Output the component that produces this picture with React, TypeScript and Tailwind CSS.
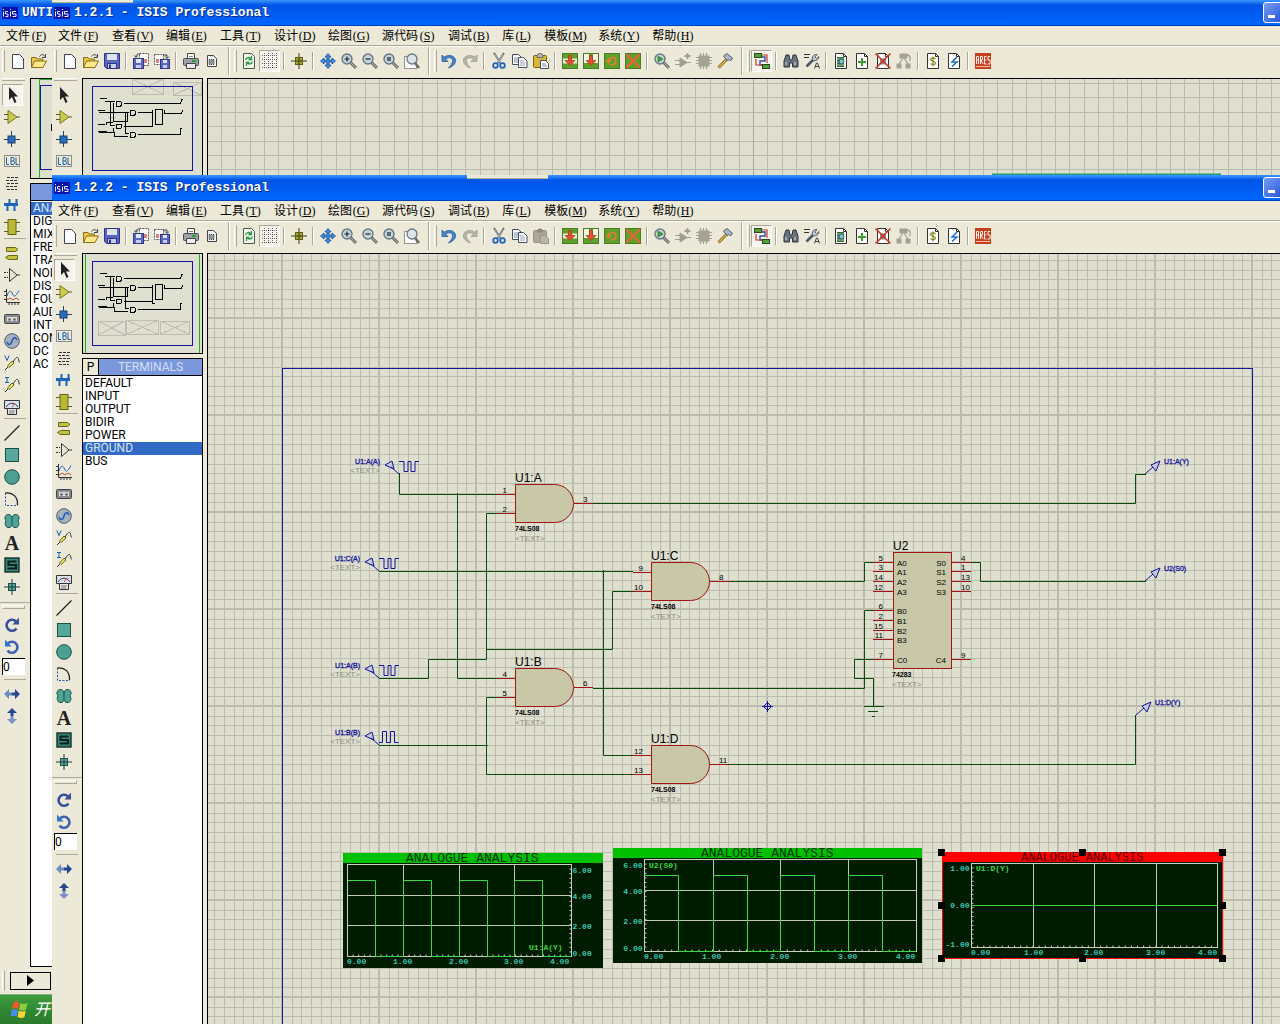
import type { ReactNode } from "react";

const page = (
  <path d="M2.500 1.500h7l4 4v10h-11z" fill="#fbfcff" stroke="#45454f" />
);
const chipPage = (
  <>
    <path d="M2.500 .5h8l3 3v12h-11z" fill="#fff" stroke="#333" />
    <path d="M10.500 .5v3h3" fill="none" stroke="#333" />
  </>
);
const lens = (
  <>
    <path d="M9.500 9.500l5.500 5.500" stroke="#6b6b6b" strokeWidth="3" />
    <path d="M9.500 9.500l5.500 5.500" stroke="#b5b5b5" strokeWidth="1" />
    <circle cx="6" cy="6" r="5" fill="#c3d3dc" stroke="#6c7880" strokeWidth="1.400" />
  </>
);
const probe = (
  <>
    <path d="M1 15l3-3" stroke="#333" />
    <path d="M3.500 11l4.500-5 2 2-5 4.500z" fill="#efe66a" stroke="#6a651a" />
    <path d="M9 7c2-3 3-5 4.500-4.500s1 3.500 2 5" fill="none" stroke="#333" />
  </>
);
const greenTile = <rect x=".5" y=".5" width="15" height="15" fill="#5ea02c" stroke="#4a7d22" />;
const sheetArrow = (
  <path d="M6.500 2.500h3v5h3.500l-5 5-5-5h3.500z" fill="#e2502c" stroke="#b03312" strokeWidth=".7" />
);

const icons: Record<string, ReactNode> = {
  new: page,
  open: (
    <>
      <path d="M.5 14V4.500h4.500l1 1.500h5.500v2" fill="#e9c94c" stroke="#8a6d16" />
      <path d="M.5 14.500l3-6.500h12l-3.500 6.500z" fill="#fbe98a" stroke="#8a6d16" />
      <path d="M8.500 3.500c1.500-2.500 4-2.500 5.500 0M14.500 1v3.500H11" fill="none" stroke="#345" />
    </>
  ),
  save: (
    <>
      <path d="M.5 .5h15v15h-13l-2-2z" fill="#5a66c4" stroke="#2f3688" />
      <rect x="3" y="1" width="10" height="6" fill="#dfe4f4" />
      <rect x="3.500" y="10.500" width="9" height="5" fill="#c9cfe8" stroke="#2f3688" />
      <rect x="5" y="11.500" width="2" height="3.500" fill="#2f3688" />
    </>
  ),
  importSec: (
    <>
      <path d="M6.500 .5h9v12h-9z" fill="#fff" stroke="#555" strokeDasharray="2 1" />
      <path d="M10 6h4v4h-4z" fill="#e08080" />
      <rect x=".5" y="5.500" width="10" height="10" fill="#5a66c4" stroke="#2f3688" />
      <rect x="3" y="6" width="5" height="4" fill="#e4e8f6" />
      <rect x="3" y="12" width="5" height="3" fill="#c9cfe8" />
      <path d="M3 4c0-3 2-3 4-3M1.500 2.500l1.500 2 1.500-2" fill="none" stroke="#345" />
    </>
  ),
  exportSec: (
    <>
      <path d="M.5 1.500h9v10h-9z" fill="#fff" stroke="#555" strokeDasharray="2 1" />
      <path d="M2 6h3v4H2z" fill="#e08080" />
      <rect x="6.500" y="6.500" width="9" height="9" fill="#5a66c4" stroke="#2f3688" />
      <rect x="9" y="7" width="4" height="3" fill="#e4e8f6" />
      <rect x="9" y="12" width="4" height="3" fill="#c9cfe8" />
      <path d="M9 2h4v3M11 3.500l2 2 2-2" fill="none" stroke="#345" />
    </>
  ),
  print: (
    <>
      <path d="M4.500 6V.5h7V6" fill="#fff" stroke="#444" />
      <path d="M6 3.500h4" stroke="#888" />
      <rect x=".5" y="5.500" width="15" height="7" rx="1" fill="#9ba2a6" stroke="#474c50" />
      <path d="M3.500 10.500h9v5h-9z" fill="#eee" stroke="#444" />
      <rect x="9" y="7" width="4" height="2" fill="#2f9e33" />
    </>
  ),
  markArea: (
    <>
      <path d="M3.500 2.500h6l3 3v8h-9z" fill="#f4f5f6" stroke="#444" />
      <rect x="5" y="6.500" width="5" height="5" fill="#8d9499" stroke="#444" strokeDasharray="1 1" />
    </>
  ),
  redraw: (
    <>
      <path d="M2.500 .5h8l3 3v12h-11z" fill="#f1f8ec" stroke="#505850" />
      <path d="M4.500 7c.5-3 4-3 5-1.500M10.500 3v3.500H7.500M11.500 8.500c-.5 3-4 3-5 1.500M5.500 13V9.500h3" fill="none" stroke="#2c9140" strokeWidth="1.300" />
    </>
  ),
  grid: (
    <path d="M0 2.500h16M0 6.500h16M0 10.500h16M0 14.500h16M2.500 0v16M6.500 0v16M10.500 0v16M14.500 0v16" stroke="#444" strokeDasharray="1 1" strokeWidth=".8" fill="none" />
  ),
  origin: (
    <>
      <path d="M8 0v16M0 8h16" stroke="#38381a" />
      <rect x="4.500" y="4.500" width="7" height="7" fill="#a5a62e" stroke="#5c5c16" />
      <path d="M8 5v6M5 8h6" stroke="#38381a" />
    </>
  ),
  pan: (
    <path d="M8 .5l3 3.500H9v3h3V5l3.500 3L12 11V9H9v3h2l-3 3.500L5 12h2V9H4v2L.5 8 4 5v2h3V4H5z" fill="#3f8de0" stroke="#134a90" strokeWidth=".8" />
  ),
  zoomIn: <>{lens}<path d="M3.500 6h5M6 3.500v5" stroke="#222" strokeWidth="1.200" /></>,
  zoomOut: <>{lens}<path d="M3.500 6h5" stroke="#222" strokeWidth="1.200" /></>,
  zoomAll: <>{lens}<rect x="4" y="4" width="4" height="4" fill="#5b6970" /></>,
  zoomArea: (
    <>
      <rect x=".5" y="3.500" width="12" height="12" fill="#fff" stroke="#333" strokeDasharray="1 1" />
      <path d="M11 10l4 5" stroke="#6b6b6b" strokeWidth="2.600" />
      <circle cx="8" cy="6" r="5" fill="#dbe4e9" stroke="#6c7880" strokeWidth="1.300" />
    </>
  ),
  undo: <path d="M1 2v6.500h6L4.700 6.200C8 3.500 12 5 11.500 8.500c-.3 2.500-2 4-4 6.500 5-1.500 7.500-5 7-8C13.800 2.500 7.500 1 3 4.200z" fill="#4585cc" stroke="#1d4f92" strokeWidth=".7" />,
  redo: <path d="M15 2v6.500H9l2.300-2.300C8 3.500 4 5 4.500 8.500c.3 2.500 2 4 4 6.500-5-1.500-7.500-5-7-8C2.200 2.500 8.500 1 13 4.200z" fill="#b8b5a8" stroke="#99968a" strokeWidth=".7" />,
  cut: (
    <>
      <path d="M3 0l7 11M13 0L6 11" stroke="#56606a" strokeWidth="1.800" />
      <path d="M3.500 1l6 9M12.500 1l-6 9" stroke="#dde3e8" strokeWidth=".6" />
      <circle cx="4.500" cy="12.500" r="2.300" fill="none" stroke="#2165bd" strokeWidth="1.800" />
      <circle cx="11.500" cy="12.500" r="2.300" fill="none" stroke="#2165bd" strokeWidth="1.800" />
    </>
  ),
  copy: (
    <>
      <path d="M.5 1.500h6l3 3v7h-9z" fill="#fff" stroke="#454f62" />
      <path d="M2 5h4M2 7h4M2 9h4" stroke="#7c8aa4" />
      <path d="M6.500 4.500h5l3.500 3.500v6.500H6.500z" fill="#fff" stroke="#454f62" />
      <path d="M8 8h4M8 10h5M8 12h5" stroke="#7c8aa4" strokeWidth=".8" />
    </>
  ),
  paste: (
    <>
      <rect x=".5" y="2.500" width="13" height="12" rx="1" fill="#d6b83c" stroke="#7c6715" />
      <path d="M4 4.500V2l2-1.500h2L10 2v2.500z" fill="#b8b8b8" stroke="#555" strokeWidth=".8" />
      <path d="M7.500 7.500h5l3 3v5h-8z" fill="#fff" stroke="#454f62" />
      <path d="M9 11h4M9 13h5" stroke="#7c8aa4" />
    </>
  ),
  pasteOff: (
    <>
      <rect x=".5" y="2.500" width="13" height="12" rx="1" fill="#aca899" stroke="#9b9789" />
      <path d="M4 4.500V2l2-1.500h2L10 2v2.500z" fill="#8e8b7e" />
      <path d="M7.500 7.500h5l3 3v5h-8z" fill="#bbb8aa" stroke="#989588" />
    </>
  ),
  blockCopy: (
    <>
      {greenTile}
      <path d="M1 5.500h5v5H1zM10 5.500h5v5h-5z" fill="#e6efd8" />
      {sheetArrow}
    </>
  ),
  blockMove: (
    <>
      {greenTile}
      <path d="M1 1h5v9H1zM10 1h5v9h-5z" fill="#f2f4e6" />
      {sheetArrow}
    </>
  ),
  blockRotate: (
    <>
      {greenTile}
      <path d="M4.500 8.500c.5-5 7-5.500 7.500-.5.3 3-3 4.500-5.500 3.500M2.500 7l2 2.500L7 7" fill="none" stroke="#e87a32" strokeWidth="1.600" />
    </>
  ),
  blockDelete: <>{greenTile}<path d="M1.500 1.500l13 13M14.500 1.500l-13 13" stroke="#ee6238" strokeWidth="2.200" /></>,
  pick: <>{lens}<path d="M4 3l5 3-5 3z" fill="#41a33a" stroke="#216a22" strokeWidth=".6" /></>,
  makeDevice: (
    <g stroke="#a19e90" fill="#a19e90">
      <path d="M5 5v9l7-4.500z" />
      <path d="M0 7.500h5M0 11.500h5M12 9.500h4" />
      <path d="M12.500 0v6M9.500 3h6" strokeWidth="1.800" />
    </g>
  ),
  packaging: (
    <g fill="#a5a294" stroke="#a5a294">
      <rect x="3" y="3" width="10" height="10" />
      <path d="M4.500 0v16M7.500 0v16M10.500 0v16M0 4.500h16M0 7.500h16M0 10.500h16" strokeWidth="1.200" />
    </g>
  ),
  hammer: (
    <>
      <path d="M1.500 14.500l8-8" stroke="#7b5c16" strokeWidth="3" />
      <path d="M1.500 14.500l8-8" stroke="#e1b64a" strokeWidth="1.400" />
      <path d="M6.500 3L10 .5l4 3.500 1.500 1-2 3-1.500-1.500-2 1z" fill="#a9b7c7" stroke="#38475a" strokeWidth=".8" />
    </>
  ),
  autoroute: (
    <>
      <path d="M7 4h4v4H6v4h3" fill="none" stroke="#2d4eb0" strokeWidth="1.400" />
      <path d="M8 2h5v8M2 6v6h6" fill="none" stroke="#c8372d" strokeWidth="1.200" />
      <rect x=".5" y=".5" width="7" height="4" fill="#56a03a" stroke="#244f17" />
      <rect x="8.500" y="11.500" width="7" height="4" fill="#56a03a" stroke="#244f17" />
    </>
  ),
  find: (
    <>
      <path d="M1 14V8l2-6h3l1 5h2l1-5h3l2 6v6H9.500v-4h-3v4z" fill="#69737f" stroke="#2e353d" />
      <path d="M3 9v3M12 9v3" stroke="#c7d0da" strokeWidth="1.200" />
    </>
  ),
  propTool: (
    <>
      <path d="M0 1.500h6M0 4.500h5" stroke="#333" />
      <path d="M2.500 13.500L9 7" stroke="#4f5a66" strokeWidth="2.600" />
      <path d="M8.500 7.500C7.500 4 9.500 1 13 1.500L11 4l1.500 1.500L15 3.500c0 3-2.500 5-6.500 4z" fill="#bcc7d2" stroke="#3f4953" strokeWidth=".8" />
      <path d="M10.500 15.500l2-5.500h1l2 5.500M11 13.500h4" fill="none" stroke="#333" strokeWidth=".9" />
    </>
  ),
  explorer: (
    <>
      {chipPage}
      <path d="M4 4h7v10H4z" fill="#2f6b35" />
      <path d="M4 6h8M4 9h8M4 12h8" stroke="#d8ecd2" strokeWidth=".8" />
      <circle cx="8.500" cy="8.500" r="2.500" fill="#7cc5d4" stroke="#1d4a55" strokeWidth=".8" />
    </>
  ),
  newSheet: <>{chipPage}<path d="M8 5v8M4 9h8" stroke="#3c9c2c" strokeWidth="2" /></>,
  removeSheet: (
    <>
      {chipPage}
      <rect x="5" y="5.500" width="6" height="6" fill="#8b8b8b" />
      <path d="M.5 .5l15 15M15.500 .5l-15 15" stroke="#cf3428" strokeWidth="1.600" />
    </>
  ),
  parent: (
    <g fill="#a5a294" stroke="#a5a294">
      <rect x="4" y="1" width="7" height="4" />
      <rect x="1" y="11" width="4" height="4" />
      <rect x="10" y="11" width="4" height="4" />
      <path d="M7 5l-4 6M8 5l4 6M11 2c4 0 4 5 2 6" fill="none" strokeWidth="1.300" />
    </g>
  ),
  bom: (
    <>
      {chipPage}
      <path d="M10.500 6c-1-1.500-5-1.500-5 .5s5 1.500 5 3.500-4 2-5 .5M8 3.500v10" fill="none" stroke="#7c8a1c" strokeWidth="1.200" />
    </>
  ),
  erc: <>{chipPage}<path d="M11 4L6 9h5l-5 4.500" fill="none" stroke="#1b6fd0" strokeWidth="1.500" /></>,
  ares: (
    <>
      <rect width="16" height="16" fill="#c6401c" />
      <path d="M1.500 11V3.500h2V11M1.500 7h2M5.500 11V3.500h2V7h-2M6 7l2 4M11.500 3.500h-2V11h2M9.500 7h2M15 3.500h-2V7h2v4h-2.500" fill="none" stroke="#fff" strokeWidth=".9" />
      <path d="M1 13.500h14" stroke="#f2c0a6" />
    </>
  ),
  select: <path d="M4 0v13l3-3 2.500 6 2-1-2.500-5.500h4z" fill="#222" />,
  component: (
    <>
      <path d="M0 5.500h4M0 10.500h4M12 8h4" stroke="#555a1c" />
      <path d="M4 1.500v13L13 8z" fill="#cccb50" stroke="#77781f" />
    </>
  ),
  junction: (
    <>
      <path d="M7.500 0v16M0 8.500h16" stroke="#1e4466" />
      <rect x="4" y="5" width="7" height="7" fill="#2b6cb8" stroke="#173f77" />
    </>
  ),
  label: (
    <>
      <rect x=".5" y="2.500" width="15" height="11" fill="none" stroke="#333" strokeDasharray="1 1" />
      <path d="M2.500 4.500v7H5M7 8h2.500M7 4.500h2c1.500 0 1.500 3.500 0 3.500 2 0 2 3.500 0 3.500H7zM12 4.500v7h2.500" fill="none" stroke="#1b62a8" />
    </>
  ),
  script: (
    <>
      <path d="M3 2.500h11M2 5.500h11M3 8.500h11M2 11.500h11M3 14.500h10" stroke="#333" strokeDasharray="3 1" />
    </>
  ),
  bus: (
    <>
      <path d="M0 7.500h14" stroke="#1b66b8" strokeWidth="3" />
      <path d="M5.500 6V2M3.500 9v5M12.500 6V2M10.500 9v5" stroke="#1b66b8" strokeWidth="2" />
    </>
  ),
  subcircuit: (
    <>
      <path d="M0 3.500h16M0 12.500h16" stroke="#5c5c16" />
      <rect x="4" y=".5" width="8" height="15" fill="#bab936" stroke="#66661a" />
    </>
  ),
  terminal: (
    <g fill="#c2c140" stroke="#66661a">
      <path d="M2.500 2.500h9l2.500 2-2.500 2h-9z" />
      <path d="M13.500 10.500h-9l-3 2 3 2h9z" />
    </g>
  ),
  pin: (
    <>
      <path d="M5.500 1.500v13L13 8z" fill="none" stroke="#333" />
      <path d="M0 5.500h4M0 10.500h4" stroke="#333" strokeDasharray="2 1" />
      <path d="M13 8h3" stroke="#333" />
    </>
  ),
  graph: (
    <>
      <path d="M2.500 0v13.500H16M0 2.500h2M0 6.500h2M0 10.500h2M5 14v2M8 14v2M11 14v2M14 14v2" fill="none" stroke="#333" />
      <path d="M3 7c2-6 4-6 5.500-2S12 7 15 1.500" fill="none" stroke="#1c5db6" />
      <path d="M3 11l3-2 3 2 3-2 3 2" fill="none" stroke="#c24a2e" />
    </>
  ),
  tape: (
    <>
      <rect x=".5" y="3.500" width="15" height="9" rx="1" fill="#8a8d90" stroke="#424548" />
      <rect x="3" y="6" width="10" height="4" fill="#d9dadb" />
      <path d="M4.500 7.500h2v2h-2zM9.500 7.500h2v2h-2z" fill="#444" />
    </>
  ),
  generator: (
    <>
      <circle cx="8" cy="8" r="7.300" fill="#a7b2c0" stroke="#50586a" />
      <path d="M3 9c1.500 4 4 3 5-1s3.500-4.500 5-1" fill="none" stroke="#1f5cb8" strokeWidth="1.600" />
    </>
  ),
  vprobe: <>{probe}<path d="M.8 .5L3 5.500 5.200.5" fill="none" stroke="#1c5db6" /></>,
  iprobe: <>{probe}<path d="M1 .5h4M3 .5v5M1 5.500h4" fill="none" stroke="#1c5db6" /></>,
  instrument: (
    <>
      <path d="M.5 1.500h15v8H.5z" fill="#d7e3f1" stroke="#333" />
      <path d="M2 8c3-5 9-5 12 0" fill="none" stroke="#333" />
      <path d="M8 8l3-4" stroke="#c24a2e" />
      <path d="M3.500 9.500h9v6h-9z" fill="#e6e6e6" stroke="#333" />
      <path d="M5 12h6M5 14h5" stroke="#777" />
    </>
  ),
  line: <path d="M.5 15.500l15-15" stroke="#222" strokeWidth="1.300" />,
  box: <rect x="1.500" y="1.500" width="13" height="13" fill="#57a79d" stroke="#1d4f4a" />,
  circle: <circle cx="8" cy="8" r="7.300" fill="#4c9f93" stroke="#1d4f4a" />,
  arc: (
    <>
      <path d="M1.500 2v12.500H14" fill="none" stroke="#2357b0" strokeDasharray="2 1.500" />
      <path d="M1.500 2C9 1 14 6 13.500 14" fill="none" stroke="#222" strokeWidth="1.300" />
    </>
  ),
  path2d: (
    <path d="M8 4C6 0 1 1 1 5c0 1.500.5 2 1 3-2 3 0 7 3 6.500 2 0 2.500-1.500 3-2.500.5 1 1 2.500 3 2.500 3.500.5 5-3.500 3-6.500.5-1 1-1.500 1-3 0-4-5-5-7-1zM8 4v8" fill="#4fa498" stroke="#1d4f4a" />
  ),
  symbol: (
    <>
      <rect x="1" y="1" width="14" height="14" fill="#3b867b" stroke="#12302d" strokeWidth="1.400" />
      <path d="M12.500 4.500H4.500v3.500h7.500v3.500H3.500" fill="none" stroke="#0a1e1c" strokeWidth="2.200" />
    </>
  ),
  marker: (
    <>
      <path d="M8 0v16M0 8h16" stroke="#1d3f3c" />
      <rect x="4.500" y="4.500" width="7" height="7" fill="#5aa597" stroke="#1d4f4a" />
      <path d="M8 5v6M5 8h6" stroke="#1d3f3c" />
    </>
  ),
  rotCw: (
    <>
      <path d="M12.500 11.500A5.500 5.500 0 1 1 12 4.500" fill="none" stroke="#37509c" strokeWidth="2.600" />
      <path d="M15 .5v7H8.500z" fill="#37509c" />
    </>
  ),
  rotCcw: (
    <>
      <path d="M3.500 11.500A5.500 5.500 0 1 0 4 4.500" fill="none" stroke="#3f62b0" strokeWidth="2.600" />
      <path d="M1 .5v7h6.500z" fill="#2a75cf" />
    </>
  ),
  flipH: (
    <>
      <path d="M0 8l5-5v3.500h3v3H5V13z" fill="#6f8cc4" />
      <path d="M16 8l-5-5v3.500H8v3h3V13z" fill="#26488f" />
    </>
  ),
  flipV: (
    <>
      <path d="M8 0l5 5H9.500v3h-3V5H3z" fill="#26488f" />
      <path d="M8 16l5-5H9.500V8h-3v3H3z" fill="#7f92c8" />
    </>
  ),
};

function Icon({ name }: { name: string }) {
  return (
    <svg viewBox="0 0 16 16" className="size-4 shrink-0 overflow-visible" aria-hidden="true">
      {icons[name]}
    </svg>
  );
}

function ToolButton({ name, pressed = false }: { name: string; pressed?: boolean }) {
  return (
    <button
      type="button"
      aria-label={name}
      className={
        pressed
          ? "flex h-[22px] w-[21px] shrink-0 items-center justify-center border border-t-[#aca899] border-r-white border-b-white border-l-[#aca899] bg-[#f6f4ec]"
          : "flex h-[22px] w-[21px] shrink-0 items-center justify-center"
      }
    >
      <Icon name={name} />
    </button>
  );
}

function Sep() {
  return (
    <span className="flex h-[18px] w-2 shrink-0 justify-center">
      <span className="w-0.5 border-r border-l border-r-white border-l-[#aca899]" />
    </span>
  );
}

function BandSep() {
  return (
    <span className="flex h-7 w-4 shrink-0 items-center gap-1 pl-1.5">
      <span className="h-7 w-0.5 border-r border-l border-r-white border-l-[#aca899]" />
      <span className="h-[22px] w-[3px] border-r border-l border-r-[#aca899] border-l-white" />
    </span>
  );
}

const fullToolbar =
  "new open save | importSec exportSec | print markArea || redraw grid* | origin | pan zoomIn zoomOut zoomAll zoomArea || undo redo | cut copy paste | blockCopy blockMove blockRotate blockDelete | pick makeDevice packaging hammer || autoroute* | find propTool | explorer newSheet removeSheet parent | bom erc | ares";

function Toolbar({ items }: { items: string }) {
  return (
    <div className="flex h-8 shrink-0 items-center overflow-hidden border-t border-white bg-[#ece9d8] pb-1 pl-0.5">
      <span className="mr-0.5 h-[22px] w-[3px] shrink-0 border-r border-l border-r-[#aca899] border-l-white" />
      {items.split(" ").map((it, i) =>
        it === "|" ? (
          <Sep key={i} />
        ) : it === "||" ? (
          <BandSep key={i} />
        ) : (
          <ToolButton key={i} name={it.replace("*", "")} pressed={it.endsWith("*")} />
        ),
      )}
    </div>
  );
}

const fullMenu: [string, string][] = [
  ["文件", "F"],
  ["查看", "V"],
  ["编辑", "E"],
  ["工具", "T"],
  ["设计", "D"],
  ["绘图", "G"],
  ["源代码", "S"],
  ["调试", "B"],
  ["库", "L"],
  ["模板", "M"],
  ["系统", "Y"],
  ["帮助", "H"],
];

function MenuBar({ items }: { items: [string, string][] }) {
  return (
    <nav className="flex h-5 shrink-0 items-center gap-3 overflow-hidden border-b border-[#aca899] bg-[#ece9d8] pl-1.5 text-[12px] leading-4 text-black">
      {items.map(([t, k]) => (
        <button key={t} type="button" className="flex shrink-0 whitespace-nowrap">
          <span>{t}</span>
          <span className="w-[18px] text-center font-['Liberation_Serif',serif]">
            (<u>{k}</u>)
          </span>
        </button>
      ))}
    </nav>
  );
}

function TitleBar({ title, controls = true }: { title: string; controls?: boolean }) {
  return (
    <header className="flex h-[26px] shrink-0 items-center overflow-hidden border-b border-[#0040b8] bg-linear-to-b from-[#3c96ff] via-[#0054e6] via-20% to-[#0066ff] pl-0.5">
      <svg viewBox="0 0 16 12" className="h-3 w-4 shrink-0" aria-hidden="true">
        <rect width="16" height="12" fill="#0a12a8" />
        <path d="M1.500 4.500v5M1.500 2v1M6 4.500H3.500V7H6v2.500H3.500M8.500 4.500v5M8.500 2v1M14 4.500h-3.500V7H14v2.500h-3.500" fill="none" stroke="#e8ecff" />
      </svg>
      <h1 className="ml-1 shrink-0 font-['Liberation_Mono',monospace] text-[13px] leading-4 font-bold whitespace-nowrap text-white [text-shadow:1px_1px_0_#0a2a8a]">
        {title}
      </h1>
      {controls && (
        <button
          type="button"
          aria-label="Minimize"
          className="-mr-1 ml-auto flex h-[21px] w-[21px] shrink-0 items-end rounded-[3px] border border-white bg-linear-to-br from-[#7a9cf0] to-[#2350d8] p-1"
        >
          <span className="h-[3px] w-[7px] bg-white" />
        </button>
      )}
    </header>
  );
}

const sideGroups = [
  ["select", "component", "junction", "label", "script", "bus", "subcircuit"],
  ["terminal", "pin", "graph", "tape", "generator", "vprobe", "iprobe", "instrument"],
  ["line", "box", "circle", "arc", "path2d", "A", "symbol", "marker"],
];

function SideButton({ name, pressed }: { name: string; pressed?: boolean }) {
  return (
    <button
      type="button"
      aria-label={name}
      className={
        pressed
          ? "ml-0.5 flex h-[22px] w-[21px] items-center justify-center border border-t-[#aca899] border-r-white border-b-white border-l-[#aca899] bg-[#f6f4ec]"
          : "flex h-[22px] w-6 items-center justify-center"
      }
    >
      {name === "A" ? (
        <span className="font-['Liberation_Serif',serif] text-[20px] leading-5 font-bold text-[#222]">A</span>
      ) : (
        <Icon name={name} />
      )}
    </button>
  );
}

function SideSep() {
  return <div className="ml-1 h-1 w-[22px] border-t border-[#aca899]" />;
}

function SideBar({ pressed, short = false }: { pressed: boolean; short?: boolean }) {
  const groups = short ? [sideGroups[0].slice(0, 4)] : sideGroups;
  return (
    <div className="flex w-[30px] shrink-0 flex-col overflow-hidden bg-[#ece9d8]">
      <div className="mb-[3px] ml-0.5 h-[3px] w-[23px] border-t border-b border-t-white border-b-[#aca899]" />
      {groups.map((g, i) => (
        <div key={i} className="flex flex-col">
          {i > 0 && <SideSep />}
          {g.map((n) => (
            <SideButton key={n} name={n} pressed={pressed && n === "select"} />
          ))}
        </div>
      ))}
      {!short && (
        <>
          <div className="mt-1 border-t border-[#aca899]" />
          <div className="mt-0.5 mb-[5px] ml-0.5 h-1 w-[23px] border border-t-white border-r-[#aca899] border-b-[#aca899] border-l-white" />
          <SideButton name="rotCw" />
          <SideButton name="rotCcw" />
          <input
            aria-label="Rotation angle"
            defaultValue="0"
            className="mb-1 ml-0.5 h-[17px] w-[23px] border-t border-l border-black bg-white font-['Roboto',sans-serif] text-[12px] leading-4 text-black outline-none"
          />
          <SideSep />
          <SideButton name="flipH" />
          <SideButton name="flipV" />
        </>
      )}
    </div>
  );
}

function CrossBox({ x, y, w, h }: { x: number; y: number; w: number; h: number }) {
  return <path d={`M${x} ${y}h${w}v${h}h${-w}zl${w} ${h}M${x} ${y + h}l${w} ${-h}`} fill="none" stroke="#bdbdb4" strokeWidth="3" />;
}

function Overview({ variant }: { variant: "shifted" | "full" }) {
  return (
    <div className="h-[101px] shrink-0 border border-black bg-[#dfdfcf]">
      <svg viewBox="249 253 357 297" className="block h-[99px] w-[119px]" shapeRendering="crispEdges" aria-hidden="true">
        {variant === "full" ? (
          <>
            <path d="M256.500 252v300M598.500 252v300" stroke="#19b419" strokeWidth="3" />
            <CrossBox x={294} y={454} w={82} h={42} />
            <CrossBox x={379} y={452} w={96} h={42} />
            <CrossBox x={481} y={454} w={88} h={40} />
          </>
        ) : (
          <>
            <CrossBox x={396} y={253} w={95} h={46} />
            <CrossBox x={520} y={262} w={84} h={40} />
          </>
        )}
        <rect x="277.500" y="275.500" width="300" height="252" fill="none" stroke="#1414a0" strokeWidth="3" />
        <g fill="none" stroke="#000" strokeWidth="3">
          <path d="M348 320h14q8 7 0 14h-14zM390 347h14q8 7 0 14h-14zM348 388h14q8 7 0 14h-14zM390 413h14q8 7 0 14h-14zM466 344h20v45h-20z" />
          <path d="M371 326h171l4-13h4M414 354h44v-8M371 394h87v-44M414 420h128v-20h4M492 346v9h52l4-8" />
          <path d="M300 312h20M314 320h30M294 348h22M296 352h92M294 389h22M318 392v-9h22M294 410h26M296 412h46v12h42M332 320v71h14M341 325v54h40v-27M377 352v65h10M341 400v12" />
          {variant === "full" && <path d="M458 381v20M456 401h8" />}
        </g>
      </svg>
    </div>
  );
}

const wire = "#0a4a0a";
const pinRed = "#a01414";
const ink = "#1414a0";

function gridLines(pitch: number, ox: number, oy: number, w: number, h: number) {
  let minor = "";
  let major = "";
  for (let i = -120; i <= 240; i++) {
    const x = Math.round(ox + i * pitch);
    if (x > 0 && x < w) {
      if (i % 10 === 0) major += `M${x} 0V${h}`;
      else minor += `M${x + 0.5} 0V${h}`;
    }
    const y = Math.round(oy + i * pitch);
    if (y > 0 && y < h) {
      if (i % 10 === 0) major += `M0 ${y}H${w}`;
      else minor += `M0 ${y + 0.5}H${w}`;
    }
  }
  return { minor, major };
}

function Gate({ x, y, name, a, b, out }: { x: number; y: number; name: string; a: string; b: string; out: string }) {
  return (
    <g>
      <path d={`M${x + 0.5} ${y + 0.5}h39a19 19 0 0 1 0 38h-39z`} fill="#c8c8a8" stroke={pinRed} />
      <path d={`M${x - 18} ${y + 10.5}h18M${x - 18} ${y + 29.5}h18M${x + 59} ${y + 19.5}h19`} stroke={pinRed} />
      <g fontSize="8">
        <text x={x - 8} y={y + 9} textAnchor="end">{a}</text>
        <text x={x - 8} y={y + 28} textAnchor="end">{b}</text>
        <text x={x + 68} y={y + 18}>{out}</text>
        <text x={x} y={y + 57} fill="#8c8c80">&lt;TEXT&gt;</text>
      </g>
      <text x={x} y={y + 47} fontSize="7" fontWeight="bold">74LS08</text>
      <text x={x} y={y - 2} fontSize="12">{name}</text>
    </g>
  );
}

function Source({ x, y, name, low = false }: { x: number; y: number; name: string; low?: boolean }) {
  return (
    <g>
      <path
        d={`M${x - 14} ${y - 9}l7-4 2 8zM${x - 8} ${y - 7}l8 7`}
        fill="#c4c8d8"
        stroke={ink}
      />
      <path
        d={low ? `M${x} ${y - 2.5}h3.500v-11h4v11h4v-11h4v11h4` : `M${x} ${y - 12.5}h5v10h4v-10h3v10h4v-10h4`}
        fill="none"
        stroke={ink}
      />
      <text x={x - 19} y={y - 10} fontSize="7" textAnchor="end" fill={ink} stroke={ink} strokeWidth=".3">{name}</text>
      <text x={x - 19} y={y - 1} fontSize="8" textAnchor="end" fill="#8c8c80">&lt;TEXT&gt;</text>
    </g>
  );
}

function Probe({ x, y, name }: { x: number; y: number; name: string }) {
  return (
    <g>
      <path d={`M${x} ${y}l8-7M${x + 15} ${y - 13}l-9 4 5 6z`} fill="#c4c8d8" stroke={ink} />
      <text x={x + 19} y={y - 10} fontSize="7" fill={ink} stroke={ink} strokeWidth=".3">{name}</text>
    </g>
  );
}

type ChartProps = {
  box: [number, number, number, number];
  plot: [number, number, number, number];
  cols: number[];
  rows: number[];
  trace: string;
  yLabels: [string, number][];
  yRight?: boolean;
  xLabels: number[];
  label: [string, number, number];
  titleX: number;
  titleSize: number;
  selected?: boolean;
};

function Chart({ box, plot, cols, rows, trace, yLabels, yRight, xLabels, label, titleX, titleSize, selected }: ChartProps) {
  const [bx, by, bw, bh] = box;
  const [px, py, pw, ph] = plot;
  let ticks = "";
  for (let i = 1; i < 40; i++) ticks += `M${px + (pw * i) / 40} ${py + ph}v-2`;
  const n = Math.round(ph / 4.5);
  const tx = yRight ? px + pw : px;
  for (let i = 1; i < n; i++) ticks += `M${tx} ${py + (ph * i) / n}h${yRight ? -2 : 2}`;
  return (
    <g fontFamily="'Liberation Mono', monospace">
      <rect x={bx} y={by} width={bw} height={bh} fill="#001c00" />
      <rect x={bx} y={by} width={bw} height="10" fill={selected ? "#ff0000" : "#00c000"} />
      {selected && <rect x={bx + 0.5} y={by + 0.5} width={bw - 1} height={bh - 1} fill="none" stroke="#ff0000" />}
      <text x={titleX} y={by + 9} fontSize={titleSize} fill={selected ? "#500000" : "#003000"}>ANALOGUE ANALYSIS</text>
      <rect x={px} y={py} width={pw} height={ph} fill="none" stroke="#c8d0b8" />
      <path d={cols.map((c) => `M${c} ${py}v${ph}`).join("") + rows.map((r) => `M${px} ${r}h${pw}`).join("")} stroke="#c0c8b0" />
      <path d={ticks} stroke="#c8d0b8" />
      <path d={trace} fill="none" stroke="#40d840" />
      <g fontSize="8" fontWeight="bold" fill="#3cc4b4">
        {yLabels.map(([t, y]) => (
          <text key={t} x={yRight ? px + pw + 1 : px - 2} y={y + 3} textAnchor={yRight ? "start" : "end"}>{t}</text>
        ))}
        {xLabels.map((x, i) => (
          <text key={x} x={x} y={py + ph + 7.5}>{`${i}.00`}</text>
        ))}
        <text x={label[1]} y={label[2] + 3} fill="#3fd83f">{label[0]}</text>
      </g>
    </g>
  );
}

function pulses(starts: number[], half: number, top: number, bottom: number, end: number) {
  return starts.map((s, i) => `M${s} ${i ? bottom : top}V${top}h${half}V${bottom}H${starts[i + 1] ?? end}`).join("");
}

const leftPins: [string, string, number][] = [
  ["5", "A0", 562],
  ["3", "A1", 571],
  ["14", "A2", 581],
  ["12", "A3", 591],
  ["6", "B0", 610],
  ["2", "B1", 620],
  ["15", "B2", 630],
  ["11", "B3", 639],
  ["7", "C0", 659],
];
const rightPins: [string, string, number][] = [
  ["4", "S0", 562],
  ["1", "S1", 571],
  ["13", "S2", 581],
  ["10", "S3", 591],
  ["9", "C4", 659],
];
const handles = [
  [941, 852], [1082, 852], [1222, 852], [941, 905], [1222, 905], [941, 958], [1082, 958], [1222, 958],
];

function Schematic() {
  const { minor, major } = gridLines(9.7, 559, 452, 2600, 1600);
  return (
    <svg className="block h-full w-full bg-[#dfdfcf]" role="img" aria-label="Schematic">
      <path d={minor} stroke="#bebeae" />
      <path d={major} stroke="#bcbcac" strokeWidth="2" />
      <g transform="translate(-208 -254)" fontFamily="'Liberation Sans', sans-serif" fill="#000">
        <rect x="282.500" y="368.500" width="970" height="700" fill="none" stroke={ink} />
        <g fill="none" stroke={wire}>
          <path d="M399.500 473V494.500H497M457.500 493V678.500H497M497 513.500H486.500V659.500H428.500V678.500H379M486 649.500H612.500V591.500H633M379 571.500H633M603.500 570V755.500H633" />
          <path d="M379 745.500H488M497 697.500H486.500V774.500H633M593 503.500H1135.500V474.500H1146M729 581.500H864.500V562.500H873M593 688.500H864.500V610.500H873M729 764.500H1135.500V715" />
          <path d="M873 659.500H854.500V678.500H873.500V706M864 706.500H884M868 711.500H878M872 716.500H875M971 562.500H980.500V581.500H1146" />
        </g>
        <Gate x={515} y={484} name="U1:A" a="1" b="2" out="3" />
        <Gate x={651} y={562} name="U1:C" a="9" b="10" out="8" />
        <Gate x={515} y={668} name="U1:B" a="4" b="5" out="6" />
        <Gate x={651} y={745} name="U1:D" a="12" b="13" out="11" />
        <rect x="893.500" y="552.500" width="58" height="116" fill="#c8c8a8" stroke={pinRed} />
        <g fontSize="8">
          {leftPins.map(([n, l, y]) => (
            <g key={l}>
              <path d={`M873 ${y + 0.5}h20`} stroke={pinRed} />
              <text x="883" y={y - 1} textAnchor="end">{n}</text>
              <text x="897" y={y + 4}>{l}</text>
            </g>
          ))}
          {rightPins.map(([n, l, y]) => (
            <g key={l}>
              <path d={`M952 ${y + 0.5}h19`} stroke={pinRed} />
              <text x="961" y={y - 1}>{n}</text>
              <text x="946" y={y + 4} textAnchor="end">{l}</text>
            </g>
          ))}
          <text x="892" y="687" fill="#8c8c80">&lt;TEXT&gt;</text>
        </g>
        <text x="892" y="677" fontSize="7" fontWeight="bold">74283</text>
        <text x="893" y="550" fontSize="12">U2</text>
        <Source x={399} y={474} name="U1:A(A)" />
        <Source x={379} y={571} name="U1:C(A)" />
        <Source x={379} y={678} name="U1:A(B)" />
        <Source x={379} y={745} name="U1:B(B)" low />
        <Probe x={1145} y={474} name="U1:A(Y)" />
        <Probe x={1145} y={581} name="U2(S0)" />
        <Probe x={1136} y={715} name="U1:D(Y)" />
        <path d="M767.500 701v11M762 706.500h11M763.500 706.500l4-4 4 4-4 4z" fill="none" stroke={ink} />
        <Chart
          box={[343, 853, 260, 115]}
          plot={[347.5, 864.5, 224, 92]}
          cols={[403.5, 459.5, 514.5]}
          rows={[895.5, 925.5]}
          trace={pulses([347.5, 403.5, 459.5, 514.5], 28, 880.5, 956.5, 571)}
          yLabels={[["6.00", 870], ["4.00", 896], ["2.00", 926], ["0.00", 953]]}
          yRight
          xLabels={[347, 393, 449, 504, 550]}
          label={["U1:A(Y)", 529, 947]}
          titleX={406}
          titleSize={13}
        />
        <Chart
          box={[613, 848, 309, 115]}
          plot={[644.5, 859.5, 272, 92]}
          cols={[713.5, 780.5, 848.5]}
          rows={[890.5, 920.5]}
          trace={pulses([644.5, 713.5, 780.5, 848.5], 34, 875.5, 951.5, 916)}
          yLabels={[["6.00", 865], ["4.00", 891], ["2.00", 921], ["0.00", 948]]}
          xLabels={[644, 702, 770, 838, 896]}
          label={["U2(S0)", 649, 865]}
          titleX={701}
          titleSize={13}
        />
        <Chart
          box={[942, 852, 281, 107]}
          plot={[971.5, 863.5, 246, 84]}
          cols={[1033.5, 1094.5, 1156.5]}
          rows={[]}
          trace="M971 905.500H1217"
          yLabels={[["1.00", 868], ["0.00", 905], ["-1.00", 944]]}
          xLabels={[971, 1024, 1084, 1146, 1198]}
          label={["U1:D(Y)", 976, 868]}
          titleX={1021}
          titleSize={12}
          selected
        />
        {handles.map(([x, y]) => (
          <rect key={`${x}-${y}`} x={x - 3} y={y - 3} width="7" height="7" />
        ))}
      </g>
    </svg>
  );
}

function EmptySheet() {
  const { minor } = gridLines(14.38, 545, 4, 2600, 400);
  return (
    <svg className="block h-full w-full bg-[#dfdfcf]" role="img" aria-label="Sheet">
      <path d={minor} stroke="#bcbcac" />
      <path d="M401.500 0V400M257.500 0V400M113.500 0V400M689.500 0V400M833.500 0V400M976.500 0V400M0 4.500H2600" stroke="#bcbcac" />
      <path d="M545.500 0V400" stroke="#a8a89c" />
      <path d="M784 95.500h229" stroke="#1c9c78" strokeWidth="2" />
    </svg>
  );
}

function ListHeader({ title }: { title: string }) {
  return (
    <div className="flex h-[17px] shrink-0 border-b border-black bg-[#7b98dd] text-[12px] leading-4">
      <button type="button" className="w-4 border-r border-black bg-[#ece9d8] text-black">P</button>
      <span className="flex-1 text-center text-[#d4def6]">{title}</span>
    </div>
  );
}

function ListRows({ items, selected }: { items: string[]; selected: string }) {
  return (
    <ul className="pt-px text-[12px] leading-[13px] text-black">
      {items.map((t) => (
        <li key={t} className={t === selected ? "h-[13px] bg-[#316ac5] pl-0.5 whitespace-nowrap text-[#d8e4f8]" : "h-[13px] pl-0.5 whitespace-nowrap"}>
          {t}
        </li>
      ))}
    </ul>
  );
}

function BackWindow() {
  return (
    <section className="flex w-[52px] shrink-0 flex-col overflow-hidden bg-[#ece9d8]">
      <TitleBar title="UNTI" controls={false} />
      <MenuBar items={fullMenu.slice(0, 1)} />
      <Toolbar items="new open" />
      <div className="flex min-h-0 flex-1">
        <SideBar pressed />
        <div className="flex min-w-0 flex-1 flex-col font-['Roboto',sans-serif]">
          <div className="mb-1 flex h-[101px] shrink-0 border border-r-0 border-black bg-[#dfdfcf] pl-2">
            <div className="flex-1 border-t border-l border-[#19b419] pt-[5px]">
              <div className="flex h-[85px] items-center justify-end border border-r-0 border-[#1414a0]">
                <span className="h-[7px] w-px bg-black" />
              </div>
            </div>
          </div>
          <div className="flex min-h-0 flex-1 flex-col border border-r-0 border-black bg-white">
            <div className="flex h-[17px] shrink-0 border-b border-black bg-[#7b98dd]" />
            <ListRows
              items={["ANA", "DIG", "MIX", "FRE", "TRA", "NOI", "DIS", "FOU", "AUD", "INT", "CON", "DC", "AC"]}
              selected="ANA"
            />
          </div>
        </div>
      </div>
      <div className="flex h-[27px] shrink-0 items-center gap-[5px] pl-0.5">
        <span className="h-5 w-[3px] border-r border-l border-r-[#aca899] border-l-white" />
        <button type="button" aria-label="Play" className="flex h-[18px] w-[41px] shrink-0 items-center justify-center border border-black bg-[#ece9d8]">
          <svg viewBox="0 0 7 11" className="h-[11px] w-[7px]" aria-hidden="true">
            <path d="M0 0l7 5.500L0 11z" />
          </svg>
        </button>
      </div>
      <button type="button" className="flex h-[30px] shrink-0 items-center gap-1 overflow-hidden border-t border-[#79b879] bg-linear-to-b from-[#3f9a3f] via-[#2f8a32] to-[#2c7a2c] pl-[10px] text-[16px] whitespace-nowrap text-white italic">
        <svg viewBox="0 0 20 18" className="h-[18px] w-5 shrink-0" aria-hidden="true">
          <path d="M3.500 1.500c2-1.500 4-1 6 0L8 8C6 7 4 7 2 8z" fill="#f0562a" />
          <path d="M10.500 2c2 1 4 1.500 7 0L16 8.500c-2 1.500-5 1-7 0z" fill="#8ccf3c" />
          <path d="M1.700 9c2-1 4-1 6 0L6.500 15.500c-2-1-4-1-6 0z" fill="#4a8cf0" />
          <path d="M8.700 9.500c2 1 4 1.500 7 0L14.500 16c-2 1.500-5 1-7 0z" fill="#fbd03c" />
        </svg>
        开
      </button>
    </section>
  );
}

export default function App() {
  return (
    <main className="flex h-screen overflow-hidden bg-[#ece9d8] font-['Liberation_Sans','Noto_Sans_CJK_SC',sans-serif]">
      <BackWindow />
      <div className="flex min-w-0 flex-1 flex-col">
        <section className="relative flex h-[175px] shrink-0 flex-col overflow-hidden">
          <TitleBar title="1.2.1 - ISIS Professional" />
          <div className="absolute top-0 left-0 h-[3px] w-[81px] border-b border-[#b0b0a0] bg-[#ece9d8]" />
          <MenuBar items={fullMenu} />
          <Toolbar items={fullToolbar} />
          <div className="flex min-h-0 flex-1">
            <SideBar pressed={false} short />
            <div className="mr-1 w-[121px] shrink-0 overflow-hidden">
              <Overview variant="shifted" />
            </div>
            <div className="min-w-0 flex-1 border-t border-l border-black">
              <EmptySheet />
            </div>
          </div>
        </section>
        <section className="relative flex min-h-0 flex-1 flex-col overflow-hidden">
          <TitleBar title="1.2.2 - ISIS Professional" />
          <div className="absolute top-0 left-[415px] h-1 w-[81px] border-b border-[#b0b0a0] bg-[#ece9d8]" />
          <MenuBar items={fullMenu} />
          <Toolbar items={fullToolbar.replace("paste", "pasteOff")} />
          <div className="flex min-h-0 flex-1">
            <SideBar pressed />
            <div className="mr-1 flex w-[121px] shrink-0 flex-col gap-1 font-['Roboto',sans-serif]">
              <Overview variant="full" />
              <div className="flex min-h-0 flex-1 flex-col border border-b-0 border-black bg-white">
                <ListHeader title="TERMINALS" />
                <ListRows items={["DEFAULT", "INPUT", "OUTPUT", "BIDIR", "POWER", "GROUND", "BUS"]} selected="GROUND" />
              </div>
            </div>
            <div className="min-w-0 flex-1 border-t border-l border-black">
              <Schematic />
            </div>
          </div>
        </section>
      </div>
    </main>
  );
}
